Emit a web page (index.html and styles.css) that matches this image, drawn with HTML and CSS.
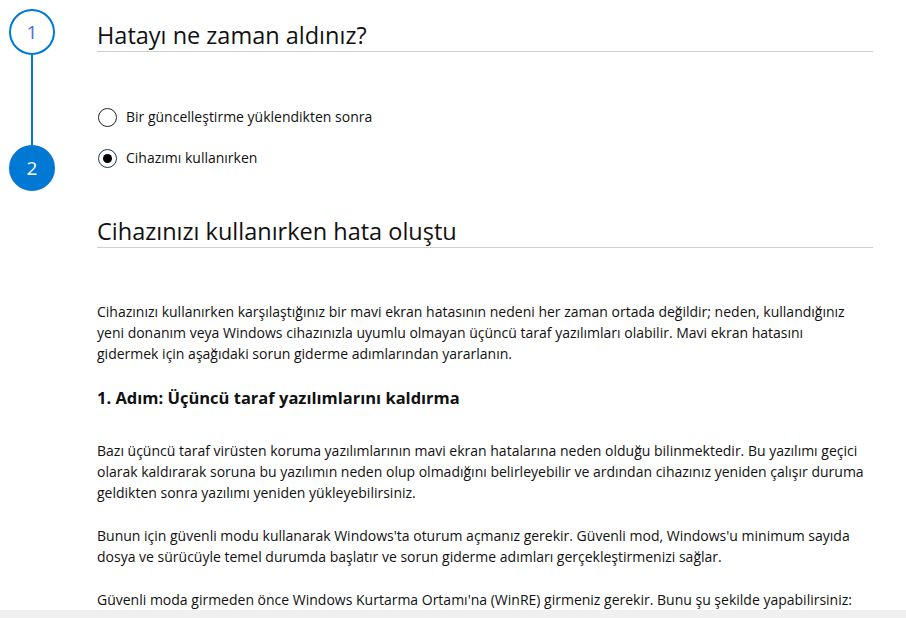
FILE: index.html
```html
<!DOCTYPE html>
<html lang="tr">
<head>
    <meta charset="UTF-8">
    <meta name="viewport" content="width=device-width, initial-scale=1.0">
    <title>Mavi ekran hatası</title>
    <link rel="stylesheet" href="styles.css">
</head>
<body>
    <div class="wizard">
        <div class="rail">
            <div class="step-dot">1</div>
            <div class="step-line"></div>
            <div class="step-dot active">2</div>
        </div>

        <div class="main">
            <section class="step">
                <h2 class="step-title">Hatayı ne zaman aldınız?</h2>
                <div class="choices">
                    <label class="choice">
                        <input type="radio" name="when">
                        <span class="mark"></span>
                        Bir güncelleştirme yüklendikten sonra
                    </label>
                    <label class="choice">
                        <input type="radio" name="when" checked>
                        <span class="mark"></span>
                        Cihazımı kullanırken
                    </label>
                </div>
            </section>

            <section class="answer">
                <h2 class="step-title">Cihazınızı kullanırken hata oluştu</h2>
                <p class="lead">Cihazınızı kullanırken karşılaştığınız bir mavi ekran hatasının nedeni her zaman ortada değildir; neden, kullandığınız yeni donanım veya Windows cihazınızla uyumlu olmayan üçüncü taraf yazılımları olabilir. Mavi ekran hatasını gidermek için aşağıdaki sorun giderme adımlarından yararlanın.</p>
                <h3>1. Adım: Üçüncü taraf yazılımlarını kaldırma</h3>
                <p>Bazı üçüncü taraf virüsten koruma yazılımlarının mavi ekran hatalarına neden olduğu bilinmektedir. Bu yazılımı geçici olarak kaldırarak soruna bu yazılımın neden olup olmadığını belirleyebilir ve ardından cihazınız yeniden çalışır duruma geldikten sonra yazılımı yeniden yükleyebilirsiniz.</p>
                <p>Bunun için güvenli modu kullanarak Windows'ta oturum açmanız gerekir. Güvenli mod, Windows'u minimum sayıda dosya ve sürücüyle temel durumda başlatır ve sorun giderme adımları gerçekleştirmenizi sağlar.</p>
                <p>Güvenli moda girmeden önce Windows Kurtarma Ortamı'na (WinRE) girmeniz gerekir. Bunu şu şekilde yapabilirsiniz:</p>
            </section>
        </div>
    </div>

    <div class="bottom-bar"></div>
</body>
</html>
```

FILE: styles.css
```css
body {
    margin: 0;
    padding: 0;
    font-family: "Open Sans", "Noto Sans", sans-serif;
    color: #000;
    background: #fff;
    overflow: hidden;
}
.wizard {
    display: flex;
    padding-right: 33px;
}
.rail {
    width: 64px;
    flex-shrink: 0;
    display: flex;
    flex-direction: column;
    align-items: center;
    padding-top: 9px;
    margin-right: 33px;
}
.step-dot {
    width: 42px;
    height: 42px;
    border: 2px solid #0078d4;
    border-radius: 50%;
    display: flex;
    align-items: center;
    justify-content: center;
    font-size: 19px;
    color: #4a6cd4;
    background: #fff;
}
.step-dot.active {
    background: #0078d4;
    color: #fff;
}
.step-line {
    width: 2px;
    height: 90px;
    background: #0078d4;
}
.main {
    flex: 1;
    min-width: 0;
}
.step-title {
    margin: 0;
    font-size: 23.5px;
    font-weight: 400;
    line-height: 32px;
    border-bottom: 1px solid #cfcfcf;
    color: #111;
}
.step {
    padding-top: 19px;
}
.choices {
    display: flex;
    flex-direction: column;
    gap: 19px;
    margin-top: 54px;
    padding-left: 1px;
}
.choice {
    display: flex;
    align-items: center;
    gap: 9px;
    font-size: 14px;
    line-height: 22px;
    color: #111;
    cursor: pointer;
}
.choice input {
    display: none;
}
.mark {
    width: 17px;
    height: 17px;
    border: 1.5px solid #222;
    border-radius: 50%;
    display: flex;
    align-items: center;
    justify-content: center;
}
.choice input:checked + .mark {
    border-color: #1a3560;
}
.choice input:checked + .mark::after {
    content: "";
    width: 9px;
    height: 9px;
    border-radius: 50%;
    background: #000;
}
.answer {
    margin-top: 46px;
}
.answer p {
    margin: 0 0 22px;
    font-size: 14px;
    line-height: 21px;
    color: #111;
}
.answer p.lead {
    max-width: 762px;
}
.answer .step-title {
    margin-bottom: 53px;
}
.answer h3 {
    margin: 0 0 30px;
    font-size: 16.5px;
    font-weight: 700;
    line-height: 24px;
    color: #111;
}
.bottom-bar {
    position: fixed;
    left: 0;
    right: 0;
    bottom: 0;
    height: 8px;
    background: #f0f0f0;
}
```
